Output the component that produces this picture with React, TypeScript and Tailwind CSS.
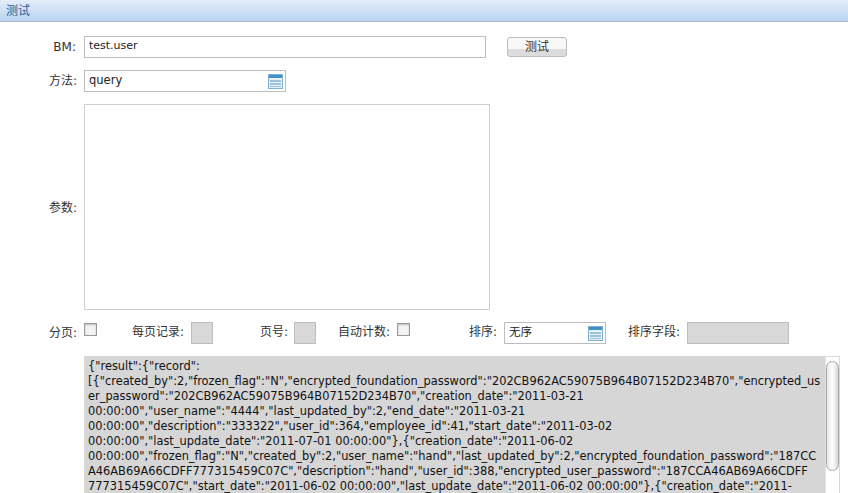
const font = { fontFamily: '"DejaVu Sans", "Noto Sans CJK SC", sans-serif' };

const lines = [
  '{"result":{"record":',
  '[{"created_by":2,"frozen_flag":"N","encrypted_foundation_password":"202CB962AC59075B964B07152D234B70","encrypted_us',
  'er_password":"202CB962AC59075B964B07152D234B70","creation_date":"2011-03-21',
  '00:00:00","user_name":"4444","last_updated_by":2,"end_date":"2011-03-21',
  '00:00:00","description":"333322","user_id":364,"employee_id":41,"start_date":"2011-03-02',
  '00:00:00","last_update_date":"2011-07-01 00:00:00"},{"creation_date":"2011-06-02',
  '00:00:00","frozen_flag":"N","created_by":2,"user_name":"hand","last_updated_by":2,"encrypted_foundation_password":"187CC',
  'A46AB69A66CDFF777315459C07C","description":"hand","user_id":388,"encrypted_user_password":"187CCA46AB69A66CDFF',
  '777315459C07C","start_date":"2011-06-02 00:00:00","last_update_date":"2011-06-02 00:00:00"},{"creation_date":"2011-',
];

function Label({ children, className = "" }: { children: React.ReactNode; className?: string }) {
  return <span className={`text-[12px] leading-[16px] -translate-y-[1px] inline-block text-[#333] whitespace-nowrap ${className}`}>{children}</span>;
}

function ListIcon() {
  return (
    <svg width="15" height="15" viewBox="0 0 15 15" className="shrink-0">
      <rect x="0.5" y="0.5" width="14" height="14" fill="#e6f0f7" stroke="#7fb0cf" />
      <rect x="1" y="1" width="13" height="3" fill="#3f93c6" />
      <rect x="2" y="6" width="11" height="2" fill="#9cc3dc" />
      <rect x="2" y="9" width="11" height="2" fill="#9cc3dc" />
      <rect x="2" y="12" width="11" height="1" fill="#9cc3dc" />
    </svg>
  );
}

function Select({ value, width }: { value: string; width: string }) {
  return (
    <div className={`${width} h-[22px] border border-[#bdbdbd] bg-white flex items-center justify-between pl-[4px] pr-[2px] text-[11.5px] text-[#222]`}>
      <span>{value}</span>
      <ListIcon />
    </div>
  );
}

function Check() {
  return <div className="w-[13px] h-[13px] border border-[#9a9a9a] bg-[#f4f4f4] shadow-[inset_0_1px_2px_#bbb] mb-[7px]" />;
}

function Disabled({ width }: { width: string }) {
  return <div className={`${width} h-[22px] border border-[#bdbdbd] bg-[#d8d8d8]`} />;
}

export default function App() {
  return (
    <div style={font} className="w-[848px] h-[493px] overflow-hidden bg-white relative">
      <div className="h-[22px] border-b border-[#a9b6c6] bg-gradient-to-b from-[#e3eefa] to-[#b8d3f0] pl-[6px] flex items-center text-[12px] text-[#2f5f92]">
        测试
      </div>
      <div className="pt-[14px] flex flex-col gap-[12px]">
        <div className="flex items-center h-[22px]">
          <div className="w-[76px] text-right"><Label className="text-[11.5px]">BM:</Label></div>
          <div className="ml-[8px] w-[402px] h-[22px] border border-[#bdbdbd] flex items-center pl-[4px] pb-[1px] text-[11px] text-[#222]">test.user</div>
          <div className="ml-[21px] w-[60px] h-[20px] rounded-[3px] border border-[#bbb] bg-[linear-gradient(#f8f8f8_60%,#dcdcdc_60%)] flex items-center justify-center text-[12px] text-[#333]">测试</div>
        </div>
        <div className="flex items-center h-[22px]">
          <div className="w-[77px] text-right"><Label>方法:</Label></div>
          <div className="ml-[7px]"><Select value="query" width="w-[202px]" /></div>
        </div>
        <div className="flex items-center h-[206px]">
          <div className="w-[77px] text-right pt-[2px]"><Label>参数:</Label></div>
          <div className="ml-[7px] w-[406px] h-[206px] border border-[#cfcfcf]" />
        </div>
        <div className="flex items-center h-[22px]">
          <div className="w-[77px] text-right"><Label>分页:</Label></div>
          <div className="ml-[7px]"><Check /></div>
          <Label className="ml-[35px] w-[52px]">每页记录:</Label>
          <div className="ml-[7px]"><Disabled width="w-[22px]" /></div>
          <Label className="ml-[47px] w-[27px]">页号:</Label>
          <div className="ml-[7px]"><Disabled width="w-[22px]" /></div>
          <Label className="ml-[22px] w-[52px]">自动计数:</Label>
          <div className="ml-[7px]"><Check /></div>
          <Label className="ml-[59px] w-[28px]">排序:</Label>
          <div className="ml-[7px]"><Select value="无序" width="w-[102px]" /></div>
          <Label className="ml-[22px] w-[52px]">排序字段:</Label>
          <div className="ml-[7px]"><Disabled width="w-[102px]" /></div>
        </div>
        <div className="ml-[84px] w-[756px] h-[150px] border border-[#d9d9d9] flex overflow-hidden">
          <div className="w-[740px] h-full bg-[#d6d6d6] pl-[3px] pt-[2px] text-[11.4px] leading-[15px] text-[#111] whitespace-nowrap overflow-hidden">
            {lines.map((l, i) => <div key={i}>{l}</div>)}
          </div>
          <div className="flex-1 bg-white border-l border-[#e4e4e4] pt-[4px] flex justify-center">
            <div className="w-[13px] h-[110px] rounded-[7px] border border-[#a8a8a8] bg-gradient-to-r from-[#e8e8e8] via-white to-[#d8d8d8]" />
          </div>
        </div>
      </div>
    </div>
  );
}
